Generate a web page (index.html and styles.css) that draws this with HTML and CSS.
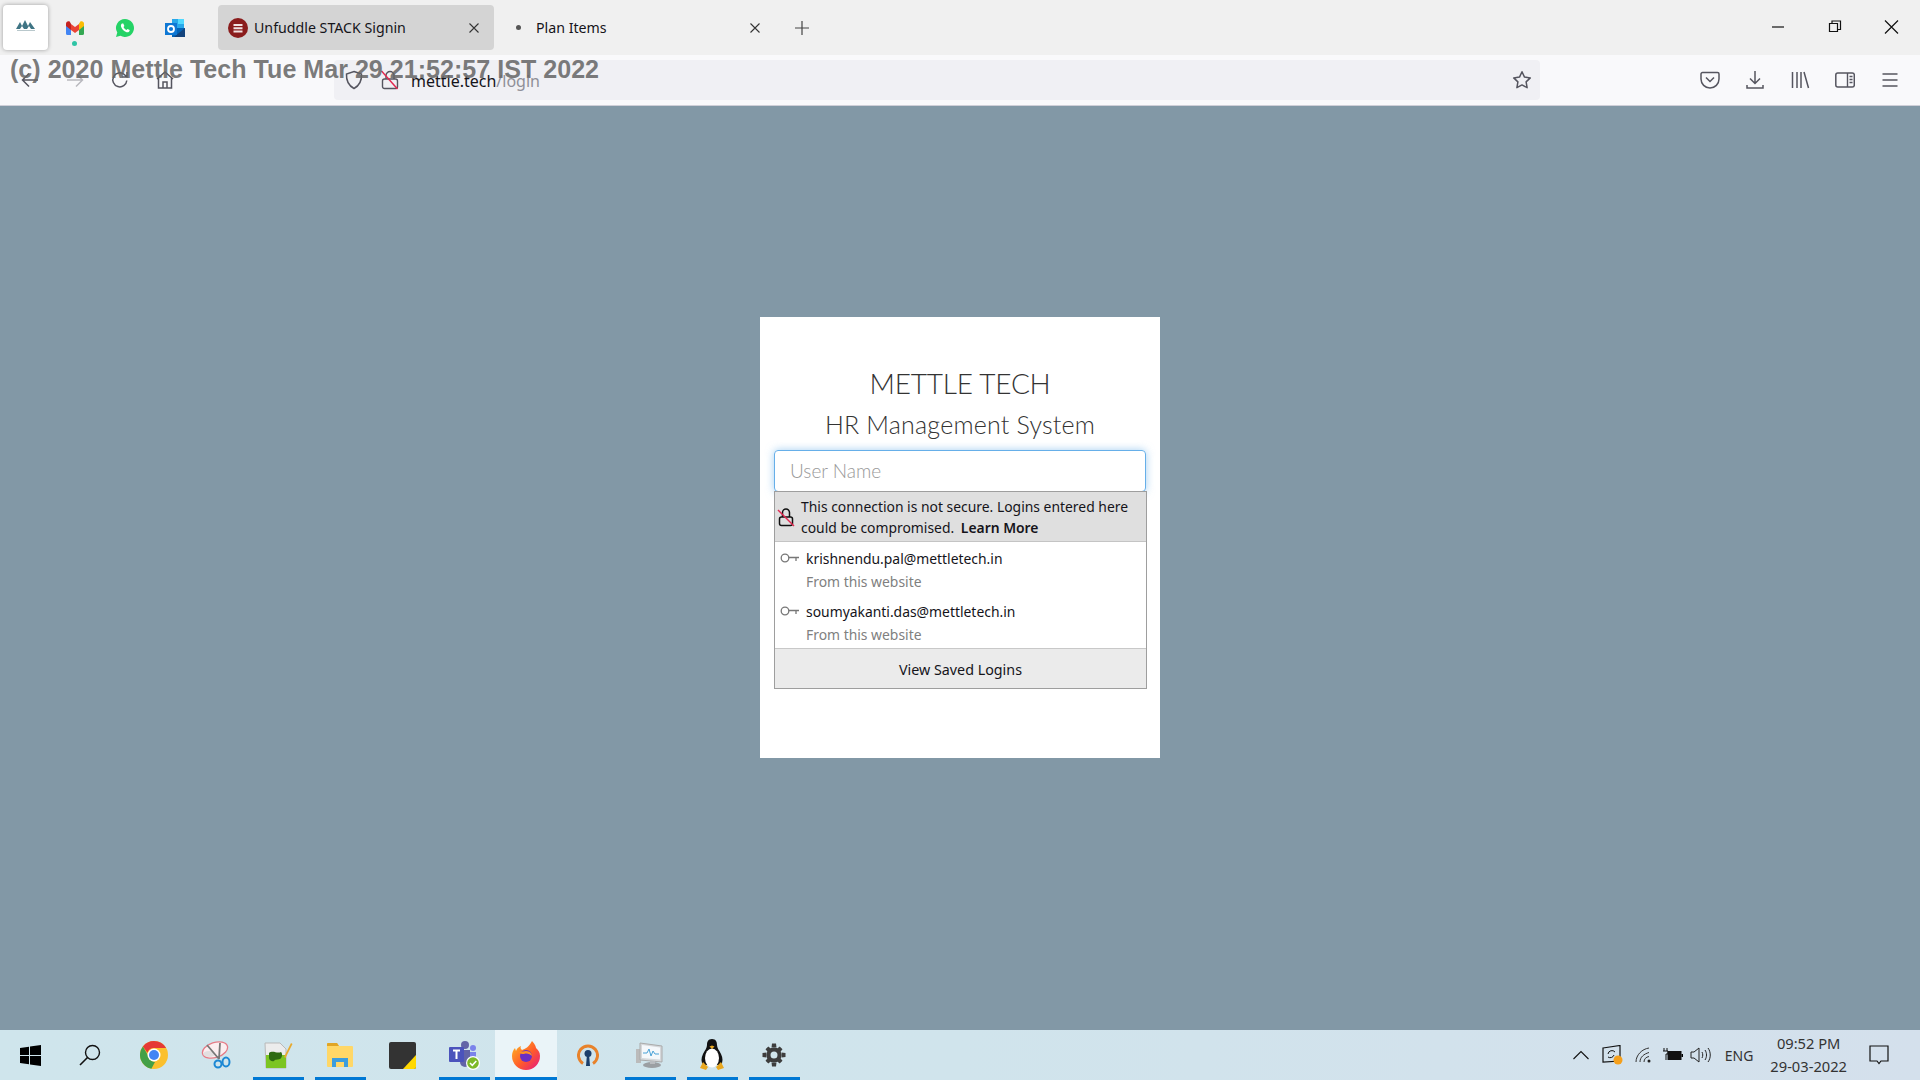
FILE: index.html
```html
<!DOCTYPE html>
<html lang="en">
<head>
  <meta charset="UTF-8">
  <title>Unfuddle STACK Signin</title>
  <link rel="stylesheet" href="styles.css">
</head>
<body>
  <!-- Tab strip -->
  <div class="tabbar">
    <div class="pinned pinned-active">
      <svg class="pinned-logo" width="22" height="12" viewBox="0 0 22 12"><path d="M1 10 5 3l2 4 3-6 3 6 2-4 5 7h-4l-2-3-2 3H9L7 7l-2 3z" fill="#3f7484"/><path d="M2 11.500h18" stroke="#b9c8cc"/></svg>
    </div>
    <div class="pinned">
      <svg width="20" height="16" viewBox="0 0 20 16"><path d="M1 15V4l2.500-2L6 4v11H2.500A1.500 1.500 0 0 1 1 13.500z" fill="#4285f4"/><path d="M19 15V4l-2.500-2L14 4v11h3.500a1.500 1.500 0 0 0 1.500-1.500z" fill="#34a853"/><path d="M14 4v6l5-4V3.500C19 1.500 16.800.500 15.300 1.600z" fill="#fbbc04"/><path d="M6 4v6l4 3 4-3V4l-4 3z" fill="#ea4335"/><path d="M1 3.500V6l5 4V4L4.700 1.600C3.200.500 1 1.500 1 3.500z" fill="#c5221f"/></svg>
      <span class="attention-dot"></span>
    </div>
    <div class="pinned">
      <svg width="20" height="20" viewBox="0 0 20 20"><path d="M10 1a9 9 0 0 0-7.700 13.600L1 19l4.500-1.200A9 9 0 1 0 10 1z" fill="#25d366"/><path d="M7 5.500c-.8.500-1.300 1.500-1 3 .6 2.500 3 5 5.500 5.700 1.500.3 2.600-.2 3-1.200l.2-1-2.200-1.100-1 1.100c-1.300-.5-2.400-1.600-3-3l.9-1L8.300 5.500z" fill="#fff"/></svg>
    </div>
    <div class="pinned">
      <svg width="22" height="20" viewBox="0 0 22 20"><path d="M8 1h12v9H8z" fill="#28a8ea"/><path d="M14 1h6v5h-6z" fill="#50d9ff"/><path d="M8 10h13v9H8z" fill="#0364b8"/><path d="M21 10v9H10z" fill="#14447d"/><rect x="1" y="5" width="12" height="12" fill="#0f78d4"/><circle cx="7" cy="11" r="3" fill="none" stroke="#fff" stroke-width="1.800"/></svg>
    </div>
    <div class="tab tab-selected">
      <svg class="favicon" width="20" height="20" viewBox="0 0 20 20"><circle cx="10" cy="10" r="10" fill="#8a1c1c"/><path d="M5.500 6h9v2h-9zM5.500 9.200h9v2h-9zM5.500 12.400h9v2h-9z" fill="#f1e2e2"/></svg>
      <span class="tab-title">Unfuddle STACK Signin</span>
      <svg class="tab-close" width="10" height="10" viewBox="0 0 10 10"><path d="M.5.500l9 9M9.500.500l-9 9" stroke="#333" stroke-width="1.100"/></svg>
    </div>
    <div class="tab">
      <span class="tab-dot"></span>
      <span class="tab-title">Plan Items</span>
      <svg class="tab-close" width="10" height="10" viewBox="0 0 10 10"><path d="M.5.500l9 9M9.500.500l-9 9" stroke="#333" stroke-width="1.100"/></svg>
    </div>
    <svg class="new-tab" width="14" height="14" viewBox="0 0 14 14"><path d="M7 0v14M0 7h14" stroke="#444" stroke-width="1.200"/></svg>
    <div class="window-controls">
      <svg width="56" height="16" viewBox="0 0 56 16"><path d="M20 8h12" stroke="#111" stroke-width="1.200"/></svg>
      <svg width="56" height="16" viewBox="0 0 56 16"><path d="M21.500 4.500h8v8h-8zM24 4.500V2h8.500v8.500H30" fill="none" stroke="#111" stroke-width="1.200"/></svg>
      <svg width="56" height="16" viewBox="0 0 56 16"><path d="M21 1.500l13 13M34 1.500l-13 13" stroke="#111" stroke-width="1.200"/></svg>
    </div>
  </div>

  <!-- Navigation toolbar -->
  <div class="toolbar">
    <div class="nav-buttons">
      <svg class="tool" width="20" height="20" viewBox="0 0 20 20"><path d="M18 10H3M9 3.500 2.500 10 9 16.500" fill="none" stroke="#55555f" stroke-width="1.500"/></svg>
      <svg class="tool" width="20" height="20" viewBox="0 0 20 20"><path d="M2 10h15M11 3.500l6.500 6.500-6.500 6.500" fill="none" stroke="#b9b9bf" stroke-width="1.500"/></svg>
      <svg class="tool" width="20" height="20" viewBox="0 0 20 20"><path d="M16.800 10.500a7 7 0 1 1-2.500-6L17 7M17 2v5h-5" fill="none" stroke="#55555f" stroke-width="1.500"/></svg>
      <svg class="tool" width="20" height="20" viewBox="0 0 20 20"><path d="M2 9l8-7 8 7M3.500 8v10h13V8M8 18v-6h4v6" fill="none" stroke="#55555f" stroke-width="1.500"/></svg>
    </div>
    <div class="urlbar">
      <svg class="shield" width="18" height="20" viewBox="0 0 18 20"><path d="M9 1.500 16.500 4c.4 6.500-2 11.500-7.500 14.500C3.500 15.500 1.100 10.500 1.500 4z" fill="none" stroke="#55555f" stroke-width="1.500"/></svg>
      <svg class="lock-off" width="18" height="20" viewBox="0 0 18 20"><rect x="1.500" y="9" width="15" height="9.500" rx="2" fill="none" stroke="#55555f" stroke-width="1.400"/><path d="M5 9V5.500a4 4 0 0 1 8 0V9" fill="none" stroke="#55555f" stroke-width="1.400"/><path d="M.5 1l16 18" stroke="#e22850" stroke-width="1.500"/></svg>
      <span class="url"><span class="url-host">mettle.tech</span>/login</span>
      <svg class="star" width="20" height="20" viewBox="0 0 20 20"><path d="M10 1.800l2.500 5.300 5.800.8-4.200 4 1 5.800-5.100-2.800-5.100 2.800 1-5.800-4.200-4 5.800-.8z" fill="none" stroke="#55555f" stroke-width="1.500" stroke-linejoin="round"/></svg>
    </div>
    <div class="tool-buttons">
      <svg class="tool-right" width="20" height="20" viewBox="0 0 20 20"><path d="M2.500 2.500h15A1.500 1.500 0 0 1 19 4v5a9 9 0 0 1-18 0V4a1.500 1.500 0 0 1 1.500-1.500z" fill="none" stroke="#55555f" stroke-width="1.500"/><path d="M6 7.500l4 4 4-4" fill="none" stroke="#55555f" stroke-width="1.500"/></svg>
      <svg class="tool-right" width="20" height="20" viewBox="0 0 20 20"><path d="M10 1v12M5 8.500l5 5 5-5M2 15v3h16v-3" fill="none" stroke="#55555f" stroke-width="1.500"/></svg>
      <svg class="tool-right" width="20" height="20" viewBox="0 0 20 20"><path d="M2.500 2v16M7 2v16M11 2v16M14 2l4.500 16" fill="none" stroke="#55555f" stroke-width="1.500"/></svg>
      <svg class="tool-right" width="20" height="20" viewBox="0 0 20 20"><rect x=".8" y="3" width="18.500" height="14" rx="2" fill="none" stroke="#55555f" stroke-width="1.500"/><path d="M12.500 3v14M14.500 6.500h3M14.500 9.500h3M14.500 12.500h3" stroke="#55555f" stroke-width="1.400"/></svg>
      <svg class="tool-right" width="20" height="20" viewBox="0 0 20 20"><path d="M2.500 4h15M2.500 10h15M2.500 16h15" stroke="#55555f" stroke-width="1.500"/></svg>
    </div>
  </div>

  <!-- Text stamped over the browser chrome by the screen recorder -->
  <div class="stamp">(c) 2020 Mettle Tech Tue Mar 29 21:52:57 IST 2022</div>

  <!-- Page -->
  <main class="page">
    <div class="login-card">
      <h1 class="brand">METTLE TECH</h1>
      <h2 class="system">HR Management System</h2>
      <div class="user-input">User Name</div>
      <div class="autocomplete">
        <div class="insecure-row">
          <svg class="insecure-icon" width="18" height="20" viewBox="0 0 18 20"><rect x="2.500" y="10" width="13" height="8.500" rx="2" fill="none" stroke="#111" stroke-width="1.500"/><path d="M5.500 10V5.500a3.500 3.500 0 0 1 7 0V10" fill="none" stroke="#111" stroke-width="1.500"/><path d="M1 3l16 16" stroke="#e22850" stroke-width="1.500"/></svg>
          <div>This connection is not secure. Logins entered here could be compromised. <b class="learn-more">Learn More</b></div>
        </div>
        <div class="login-list">
          <div class="login-row">
            <svg class="key" width="20" height="10" viewBox="0 0 20 10"><circle cx="5" cy="5" r="3.800" fill="none" stroke="#777" stroke-width="1.300"/><path d="M9 4.500h10M16 4.500V8" fill="none" stroke="#777" stroke-width="1.300"/></svg>
            <div>
              <div class="login-name">krishnendu.pal@mettletech.in</div>
              <div class="login-source">From this website</div>
            </div>
          </div>
          <div class="login-row">
            <svg class="key" width="20" height="10" viewBox="0 0 20 10"><circle cx="5" cy="5" r="3.800" fill="none" stroke="#777" stroke-width="1.300"/><path d="M9 4.500h10M16 4.500V8" fill="none" stroke="#777" stroke-width="1.300"/></svg>
            <div>
              <div class="login-name">soumyakanti.das@mettletech.in</div>
              <div class="login-source">From this website</div>
            </div>
          </div>
        </div>
        <div class="saved-logins">View Saved Logins</div>
      </div>
    </div>
  </main>

  <!-- Windows taskbar -->
  <footer class="taskbar">
    <div class="task task-start">
      <svg width="21" height="21" viewBox="0 0 21 21"><path d="M0 3l9-1.300V10H0zM10 1.500 21 0v10H10zM0 11h9v8.300L0 18zM10 11h11v10l-11-1.500z" fill="#000"/></svg>
    </div>
    <div class="task">
      <svg class="search-icon" width="22" height="22" viewBox="0 0 22 22"><circle cx="13.500" cy="8.500" r="7" fill="none" stroke="#111" stroke-width="1.400"/><path d="M8.500 13.500 1 21" stroke="#111" stroke-width="1.600"/></svg>
    </div>
    <div class="task">
      <svg width="28" height="28" viewBox="0 0 28 28"><circle cx="14" cy="14" r="14" fill="#fbc02d"/><path d="M14 0a14 14 0 0 1 12.100 7H14a7 7 0 0 0-6.600 4.700L2.900 5.500A14 14 0 0 1 14 0z" fill="#e53935"/><path d="M2.900 5.500l6 10.400A7 7 0 0 0 15 21l-3.600 6.800A14 14 0 0 1 2.900 5.500z" fill="#43a047"/><circle cx="14" cy="14" r="6.500" fill="#fff"/><circle cx="14" cy="14" r="5" fill="#4285f4"/></svg>
    </div>
    <div class="task">
      <svg width="30" height="30" viewBox="0 0 30 30"><ellipse cx="14" cy="10" rx="13" ry="7.500" transform="rotate(-18 14 10)" fill="#fbeef0" stroke="#e57b86" stroke-width="1.300"/><ellipse cx="8" cy="14" rx="6" ry="3" fill="#d9d9d9" opacity=".7"/><path d="M6 5l12 14M19 3l-1 16" stroke="#777" stroke-width="1.800"/><circle cx="17" cy="24" r="3.500" fill="none" stroke="#1c88d4" stroke-width="2"/><ellipse cx="25" cy="22" rx="3.500" ry="4.500" fill="none" stroke="#1c88d4" stroke-width="2"/></svg>
    </div>
    <div class="task task-running">
      <svg width="30" height="30" viewBox="0 0 30 30"><path d="M2 3h15l6 6v19H3z" fill="#ececec" stroke="#b9b9b9"/><path d="M3 15h20v13H3z" fill="#7cc522"/><path d="M6 13c4-3 8 1 12-1 2 2 1 6-1 7-3 1-5 0-6 2-2 1-5-1-5-3z" fill="#2e6b12"/><path d="M21 17 28 3l1.500 1-7 14z" fill="#e8a92c"/></svg>
    </div>
    <div class="task task-running">
      <svg width="28" height="26" viewBox="0 0 28 26"><path d="M1 2a1 1 0 0 1 1-1h9l2 3h13a1 1 0 0 1 1 1v19a1 1 0 0 1-1 1H2a1 1 0 0 1-1-1z" fill="#ffd767"/><path d="M1 2a1 1 0 0 1 1-1h9l2 3H1z" fill="#e0a526"/><path d="M6 25v-9h16v9h-4v-5h-8v5z" fill="#3b9ddd"/></svg>
    </div>
    <div class="task">
      <svg width="27" height="27" viewBox="0 0 27 27"><rect width="27" height="27" rx="2" fill="#333"/><path d="M27 13v12a2 2 0 0 1-2 2H14z" fill="#ffd800"/></svg>
    </div>
    <div class="task task-running">
      <svg width="32" height="30" viewBox="0 0 32 30"><circle cx="17" cy="5" r="4" fill="#6264a7"/><circle cx="25" cy="8" r="3" fill="#7b83eb"/><path d="M12 10h10v12a5 5 0 0 1-10 0z" fill="#6264a7"/><path d="M22 12h6v8a3 3 0 0 1-6 0z" fill="#7b83eb"/><rect x="1" y="7" width="15" height="15" rx="1" fill="#4b53bc"/><path d="M5 10.500h7M8.500 10.500V19" stroke="#fff" stroke-width="2"/><circle cx="25" cy="23" r="7" fill="#fff"/><circle cx="25" cy="23" r="5.800" fill="#7db928"/><path d="M22 23l2.300 2.300 4-4.300" fill="none" stroke="#fff" stroke-width="1.500"/></svg>
    </div>
    <div class="task task-running task-current">
      <svg width="30" height="30" viewBox="0 0 30 30">
        <defs><linearGradient id="fx" x1="0" y1="0" x2="1" y2="1"><stop offset="0" stop-color="#ffbd1f"/><stop offset=".55" stop-color="#ff5a2b"/><stop offset="1" stop-color="#e31587"/></linearGradient></defs>
        <path d="M21 1c3 3 4 6 4 7 2 2 4 4 4 8a14 14 0 1 1-28 0c0-3 1-6 3-8l1 3c1-3 3-4 5-5-1 2 0 3 1 4 3-1 7-3 10-9z" fill="url(#fx)"/>
        <circle cx="15" cy="16" r="6" fill="#6a2fc4"/><path d="M8 12c3 0 5-1 7-1 4 0 6 3 6 5-2-2-5-3-8-2-2 0-4 0-5-2z" fill="#ff9124"/>
      </svg>
    </div>
    <div class="task">
      <svg width="22" height="22" viewBox="0 0 22 22"><path d="M6 19.500a9.500 9.500 0 1 1 10 0" fill="none" stroke="#e8822a" stroke-width="3"/><circle cx="11" cy="9.500" r="3.500" fill="#1b3f6b"/><path d="M10 10h2l1 12H9z" fill="#1b3f6b"/></svg>
    </div>
    <div class="task task-running">
      <svg width="30" height="28" viewBox="0 0 30 28"><path d="M1 8h5v14H1z" fill="#bbb"/><path d="M5 2l22 3v16L5 19z" fill="#d5d8db" stroke="#aaa"/><path d="M7 4l18 2.500v12L7 17z" fill="#f5f8fb"/><path d="M8 12h4l2-4 2 7 2-5 2 3h4" fill="none" stroke="#4ba3d8"/><ellipse cx="17" cy="24" rx="9" ry="3" fill="#9b9fa3"/><path d="M15 20h5v3h-5z" fill="#b9bcc0"/></svg>
    </div>
    <div class="task task-running">
      <svg width="26" height="32" viewBox="0 0 26 32"><path d="M13 0c-4 0-5 3-5 6 0 3-2 5-4 9-2 4-2 8 0 11h18c2-3 2-7 0-11-2-4-4-6-4-9 0-3-1-6-5-6z" fill="#111"/><ellipse cx="13" cy="19" rx="7" ry="9.500" fill="#fff"/><path d="M10.500 7.500l2.500-1 2.500 1L13 10z" fill="#e9a820"/><path d="M4 23l5 5-2 3-6-2zM22 23l-5 5 2 3 6-2z" fill="#e9a820"/></svg>
    </div>
    <div class="task task-running">
      <svg width="24" height="24" viewBox="0 0 24 24"><path d="M12 4.500a7.500 7.500 0 1 0 0 15 7.500 7.500 0 0 0 0-15zm0 4a3.500 3.500 0 1 1 0 7 3.500 3.500 0 0 1 0-7z" fill="#3d3d3d"/><path d="M10 .5h4l.5 4h-5zM10 23.500h4l.5-4h-5zM.5 10v4l4 .5v-5zM23.500 10v4l-4 .5v-5zM3.500 6.300l2.800-2.800 3 2.500-3.300 3.300zM20.500 17.700l-2.800 2.800-3-2.500 3.300-3.300zM17.700 3.500l2.800 2.800-2.500 3L14.700 6zM6.300 20.500l-2.800-2.800 2.500-3L9.300 18z" fill="#3d3d3d"/></svg>
    </div>
    <div class="tray">
      <svg class="tray-icon tray-chevron" width="16" height="10" viewBox="0 0 16 10"><path d="M.5 9 8 1.500 15.500 9" fill="none" stroke="#111" stroke-width="1.100"/></svg>
      <svg class="tray-icon tray-wide" width="21" height="20" viewBox="0 0 21 20"><path d="M1 3l17-2.500V16L1 17z" fill="none" stroke="#111" stroke-width="1.200"/><path d="M6 9a4 4 0 0 1 7-2M12 10a4 4 0 0 1-6 2" fill="none" stroke="#111"/><circle cx="16" cy="15" r="4.500" fill="#f5a01c"/></svg>
      <svg class="tray-icon tray-wifi" width="17" height="16" viewBox="0 0 17 16"><path d="M1 15C1 8 7 2 14 1M5 15c0-5 4-8 9-9.500M9 15c0-3 2-5 5-5.500" fill="none" stroke="#333"/><circle cx="14" cy="14" r="1.500" fill="#222"/></svg>
      <svg class="tray-icon" width="20" height="14" viewBox="0 0 20 14"><path d="M1 0v3M4 0v3M0 3h5v3H3v6" fill="none" stroke="#111"/><rect x="5" y="3.500" width="13" height="8" fill="#111" stroke="#111"/><path d="M18.500 6h1.500v3h-1.500z"/></svg>
      <svg class="tray-icon" width="21" height="16" viewBox="0 0 21 16"><path d="M1 5h3l5-4v14l-5-4H1z" fill="none" stroke="#222"/><path d="M12 5c1 2 1 4 0 6M15 3c2 3 2 7 0 10M18 1c3 4 3 10 0 14" fill="none" stroke="#222"/></svg>
      <span class="lang">ENG</span>
      <div class="clock">
        <div>09:52 PM</div>
        <div>29-03-2022</div>
      </div>
      <svg class="notify" width="20" height="20" viewBox="0 0 20 20"><path d="M1 1h18v15h-7l-2 2.500L8 16H1z" fill="none" stroke="#111" stroke-width="1.200"/></svg>
    </div>
  </footer>
</body>
</html>
```

FILE: styles.css
```css
* {
  box-sizing: border-box;
}
html, body {
  height: 100%;
}
body {
  margin: 0;
  display: flex;
  flex-direction: column;
  min-height: 100vh;
  overflow: hidden;
  position: relative;
  background: #8298a6;
  font-family: 'Noto Sans', 'Open Sans', Arial, sans-serif;
}

/* tab strip */
.tabbar {
  height: 55px;
  background: #f0f0f0;
  display: flex;
  align-items: flex-start;
  padding: 5px 0 0 3px;
  flex-shrink: 0;
}
.pinned {
  width: 50px;
  height: 45px;
  display: flex;
  align-items: center;
  justify-content: center;
  position: relative;
}
.pinned-active {
  width: 45px;
  margin-right: 2px;
  background: #fff;
  border-radius: 4px;
  box-shadow: 0 0 4px rgba(0,0,0,0.35);
}
.pinned-logo {
  margin-bottom: 6px;
}
.attention-dot {
  position: absolute;
  left: 22px;
  bottom: 4px;
  width: 5px;
  height: 5px;
  border-radius: 50%;
  background: #2ec4a5;
}
.tab {
  width: 276px;
  height: 45px;
  display: flex;
  align-items: center;
  padding: 0 15px 0 10px;
  font-size: 14.2px;
  color: #15141a;
  border-radius: 4px;
}
.tab-selected {
  margin-left: 18px;
  background: #d4d4d4;
}
.tab-title {
  flex: 1;
  margin-left: 6px;
}
.tab + .tab {
  padding: 0 10px 0 22px;
}
.tab-dot {
  width: 5px;
  height: 5px;
  border-radius: 50%;
  background: #555;
  margin-right: 9px;
}
.new-tab {
  margin: 16px 0 0 25px;
}
.window-controls {
  margin-left: auto;
  display: flex;
  margin-top: 14px;
}

/* toolbar */
.toolbar {
  height: 51px;
  background: #f9f9fb;
  border-bottom: 1px solid #cfcfd8;
  display: flex;
  align-items: center;
  flex-shrink: 0;
}
.nav-buttons {
  width: 334px;
  display: flex;
  gap: 25px;
  padding-left: 20px;
}
.urlbar {
  width: 1206px;
  height: 40px;
  background: #f0f0f4;
  border-radius: 4px;
  display: flex;
  align-items: center;
  padding: 0 8px 0 11px;
}
.lock-off {
  margin-left: 18px;
}
.url {
  margin-left: 12px;
  font-size: 16px;
  line-height: 22px;
  padding-top: 2px;
  color: #8f8f98;
  flex: 1;
}
.url-host {
  color: #15141a;
}
.tool-buttons {
  display: flex;
  gap: 25px;
  margin-left: 160px;
}

/* recorder stamp */
.stamp {
  position: absolute;
  left: 10px;
  top: 55px;
  font-family: 'Liberation Sans', Arial, sans-serif;
  font-weight: bold;
  font-size: 25.1px;
  color: rgba(100,100,100,0.85);
  white-space: nowrap;
}

/* page */
.page {
  flex: 1;
  padding-top: 211px;
}
.login-card {
  width: 400px;
  height: 441px;
  margin: 0 auto;
  background: #fff;
  padding: 49px 14px 0 14px;
  text-align: center;
  color: #333;
  font-family: 'Lato', 'Open Sans', sans-serif;
}
.brand {
  margin: 0;
  font-size: 28px;
  font-weight: 300;
  letter-spacing: -0.2px;
  line-height: 34px;
}
.system {
  margin: 8px 0 0 0;
  font-size: 25px;
  font-weight: 300;
  letter-spacing: 0.2px;
  line-height: 32px;
}
.user-input {
  height: 42px;
  margin-top: 10px;
  width: 372px;
  padding: 0 15px;
  border: 1px solid #66afe9;
  border-radius: 4px;
  box-shadow: 0 0 8px rgba(102,175,233,0.6);
  text-align: left;
  font-size: 19px;
  font-weight: 300;
  line-height: 40px;
  color: #999;
}
.autocomplete {
  width: 373px;
  height: 198px;
  margin-top: -1px;
  border: 1px solid #9e9e9e;
  background: #fff;
  display: flex;
  flex-direction: column;
  text-align: left;
  font-family: 'Noto Sans', 'Open Sans', sans-serif;
  font-size: 13.9px;
  color: #15141a;
  position: relative;
}
.insecure-row {
  height: 50px;
  background: #dfdfdf;
  border-bottom: 1px solid #c4c4c4;
  display: flex;
  align-items: center;
  padding: 0 8px 0 2px;
  line-height: 21px;
  flex-shrink: 0;
}
.insecure-icon {
  flex-shrink: 0;
  margin-right: 6px;
}
.learn-more {
  font-weight: 600;
  margin-left: 3px;
}
.login-list {
  flex: 1;
  padding-top: 5px;
}
.login-row {
  display: flex;
  padding-left: 5px;
  height: 53px;
}
.login-row:last-child {
  height: 48px;
}
.key {
  margin: 6px 6px 0 0;
}
.login-name {
  line-height: 23px;
}
.login-source {
  line-height: 23px;
  color: #808080;
}
.saved-logins {
  height: 40px;
  background: #ebebeb;
  border-top: 1px solid #c8c8c8;
  text-align: center;
  font-size: 14.3px;
  line-height: 41px;
  flex-shrink: 0;
}

/* taskbar */
.taskbar {
  height: 50px;
  flex-shrink: 0;
  display: flex;
  background: linear-gradient(90deg, #cfe5ec 0%, #d0e4ec 50%, #d4e0ec 100%);
}
.task {
  width: 62px;
  height: 50px;
  display: flex;
  align-items: center;
  justify-content: center;
  position: relative;
}
.task-start {
  width: 61px;
}
.search-icon {
  margin-right: 4px;
}
.task-running::after {
  content: "";
  position: absolute;
  left: 6px;
  right: 5px;
  bottom: 0;
  height: 3px;
  background: #0078d4;
}
.task-current {
  background: #eaf4f8;
}
.task-current::after {
  left: 0;
  right: 0;
}
.tray {
  margin-left: auto;
  display: flex;
  align-items: center;
  padding-right: 31px;
  font-size: 14px;
  color: #333;
}
.tray-icon {
  margin-right: 7.5px;
}
.tray-chevron {
  margin-right: 13px;
}
.tray-wide {
  margin-right: 12px;
}
.tray-wifi {
  margin-right: 10.5px;
}
.lang {
  margin: 0 17px 0 6px;
}
.clock {
  font-size: 14.7px;
  text-align: center;
  line-height: 23px;
  margin-right: 22px;
}
```
